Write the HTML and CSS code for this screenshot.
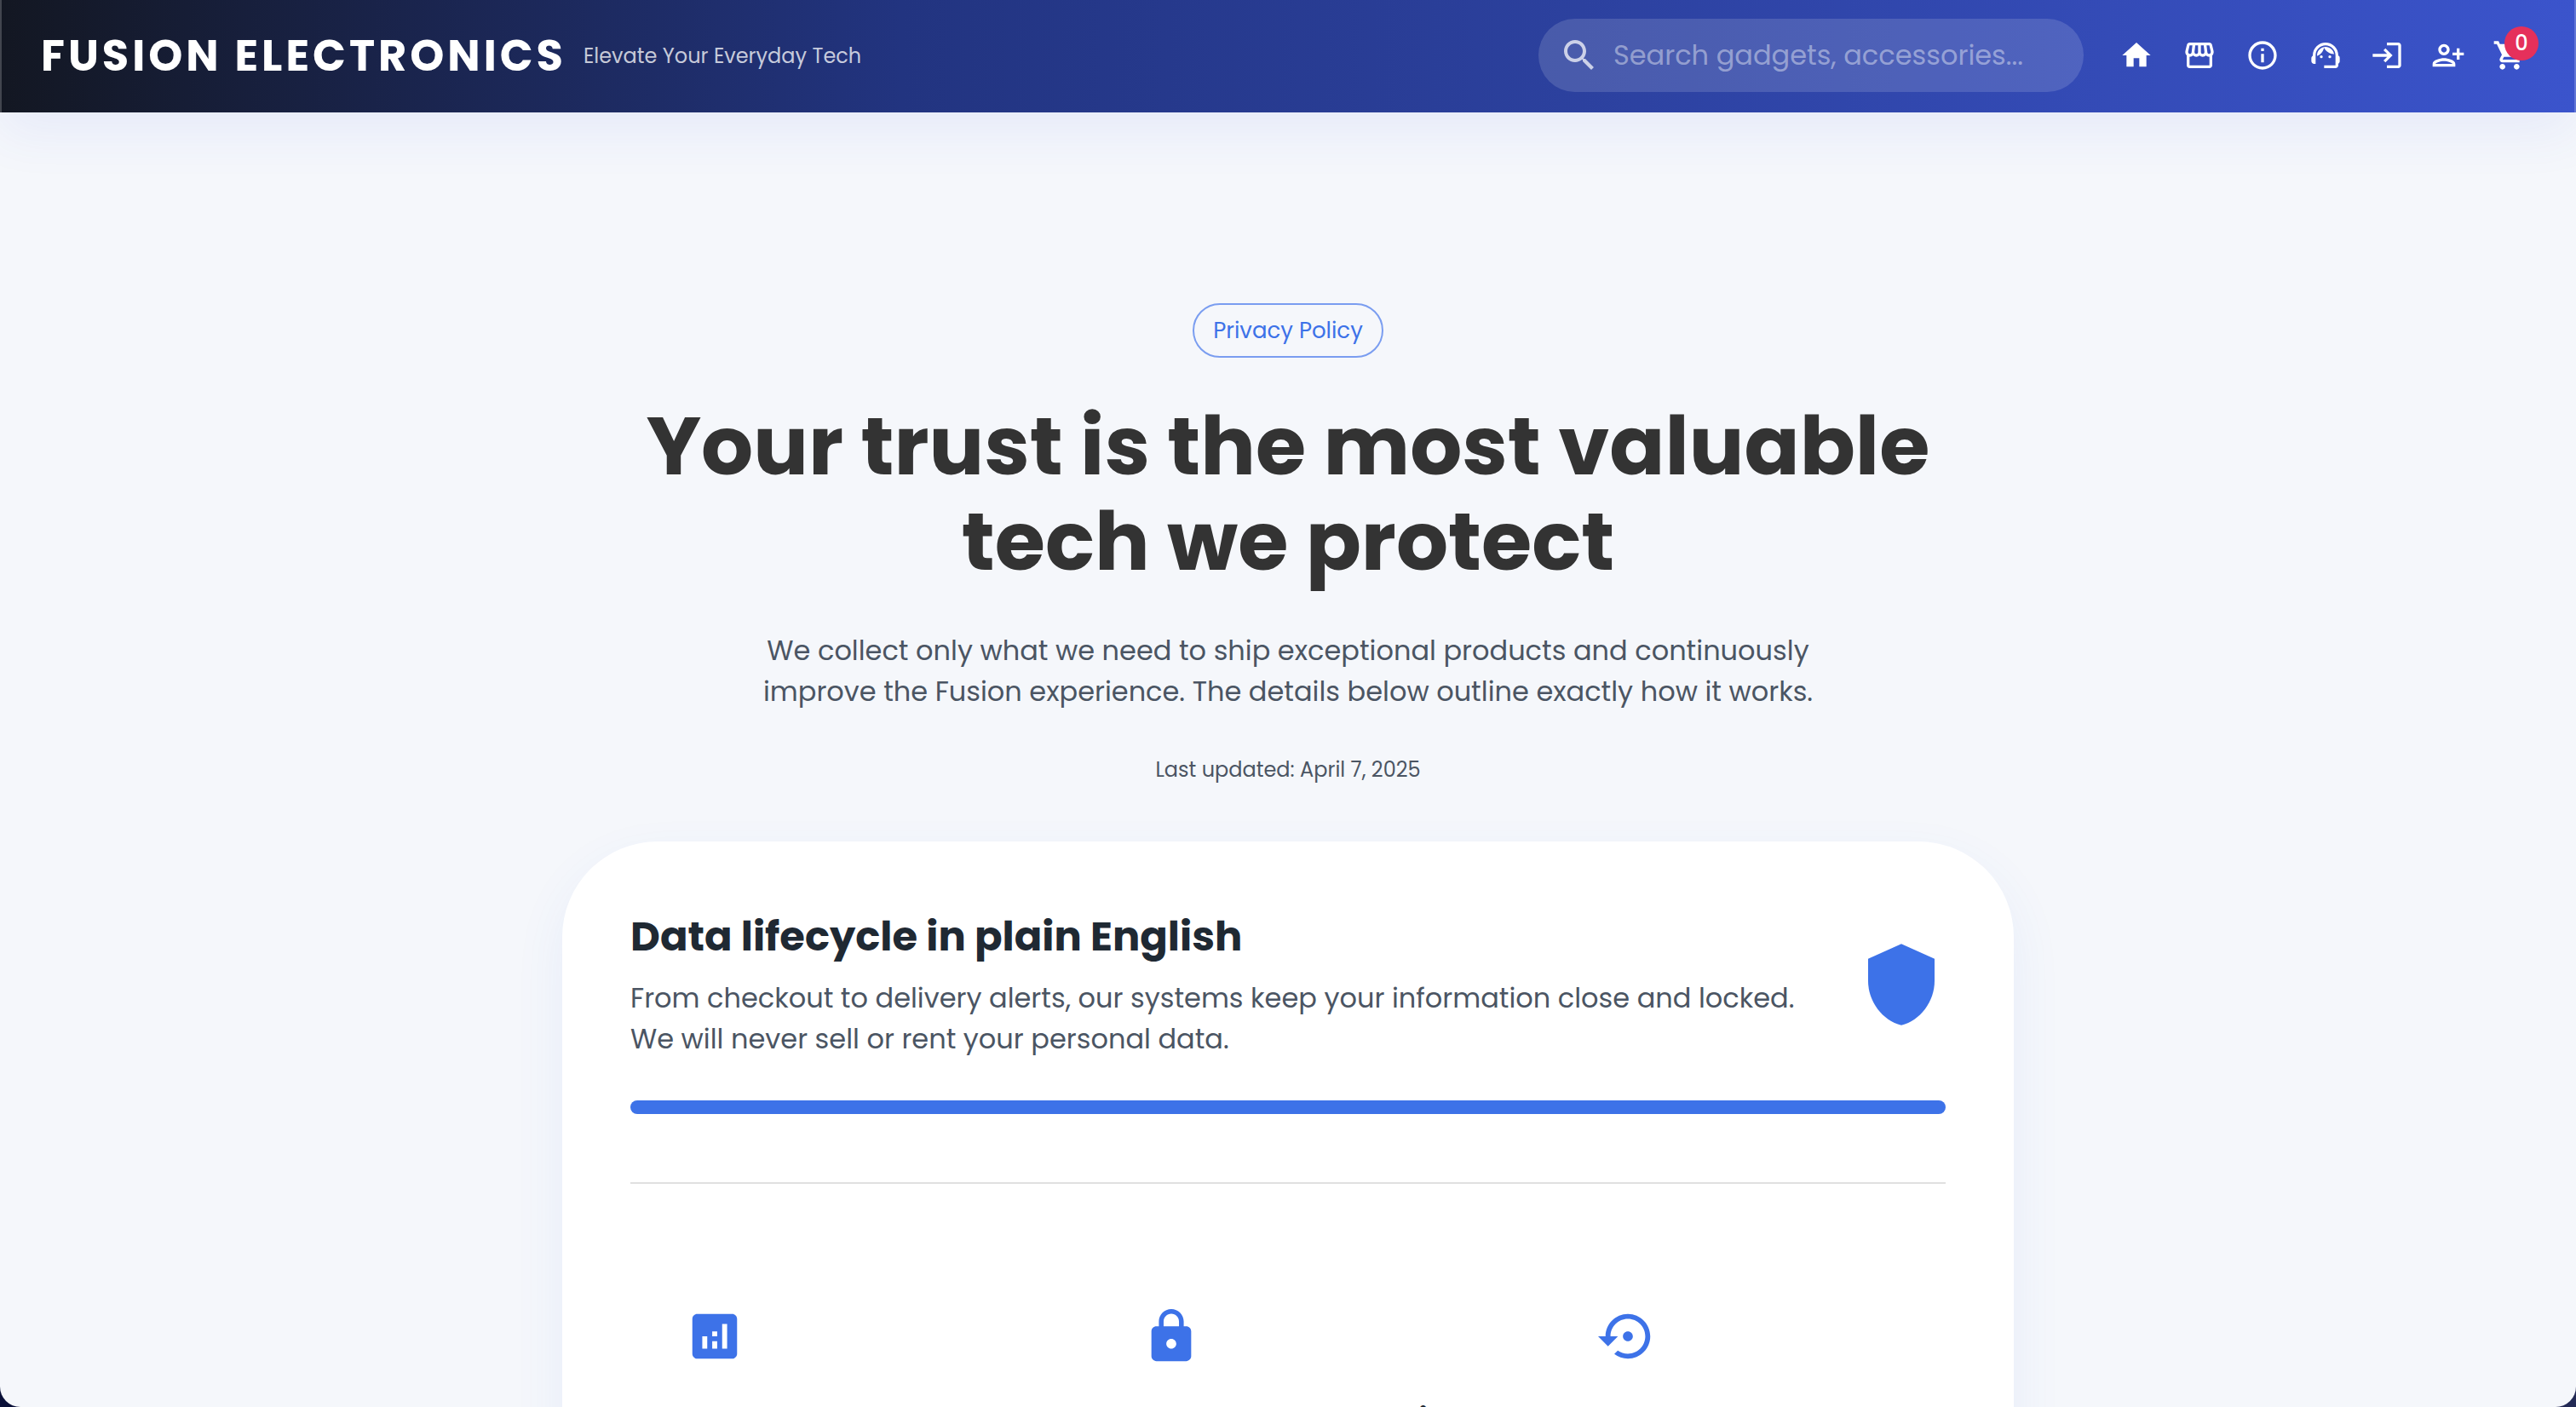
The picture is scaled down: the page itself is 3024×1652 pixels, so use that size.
FILE: index.html
```html
<!DOCTYPE html>
<html lang="en">
<head>
<meta charset="utf-8">
<meta name="viewport" content="width=device-width, initial-scale=1">
<title>Privacy Policy – Fusion Electronics</title>
<link rel="stylesheet" href="styles.css">
</head>
<body>
<div class="app">
  <header class="topbar">
    <a class="brand" href="#">FUSION ELECTRONICS</a>
    <span class="tagline">Elevate Your Everyday Tech</span>
    <label class="search">
      <svg class="search-icon" viewBox="0 0 24 24" aria-hidden="true"><path d="M15.5 14h-.79l-.28-.27C15.41 12.59 16 11.11 16 9.5 16 5.91 13.09 3 9.5 3S3 5.91 3 9.5 5.91 16 9.5 16c1.61 0 3.09-.59 4.23-1.57l.27.28v.79l5 4.99L20.49 19l-4.99-5zm-6 0C7.01 14 5 11.99 5 9.5S7.01 5 9.5 5 14 7.01 14 9.5 11.99 14 9.5 14z"/></svg>
      <input class="search-input" type="text" placeholder="Search gadgets, accessories..." aria-label="Search gadgets, accessories">
    </label>
    <nav class="nav">
      <div class="nav-links">
        <a class="nav-item" href="#" aria-label="Home"><svg viewBox="0 0 24 24"><path d="M10 20v-6h4v6h5v-8h3L12 3 2 12h3v8z"/></svg></a>
        <a class="nav-item" href="#" aria-label="Shop"><svg viewBox="0 0 24 24"><path d="M21.9 8.89l-1.05-4.37c-.22-.9-1-1.52-1.91-1.52H5.05c-.9 0-1.69.63-1.9 1.52L2.1 8.89c-.24 1.02-.02 2.06.62 2.88.08.11.19.19.28.29V19c0 1.1.9 2 2 2h14c1.1 0 2-.9 2-2v-6.94c.09-.09.2-.18.28-.28.64-.82.87-1.87.62-2.89zm-2.99-3.9l1.05 4.37c.1.42.01.84-.25 1.17-.14.18-.44.47-.94.47-.61 0-1.14-.49-1.21-1.14L16.98 5l1.93-.01zM13 5h1.96l.54 4.52c.05.39-.07.78-.33 1.07-.22.26-.54.41-.95.41-.67 0-1.22-.59-1.22-1.31V5zM8.49 9.52L9.04 5H11v4.69c0 .72-.55 1.31-1.29 1.31-.34 0-.65-.15-.89-.41-.25-.29-.37-.68-.33-1.07zm-4.45-.16L5.05 5h1.97l-.58 4.86c-.08.65-.6 1.14-1.21 1.14-.49 0-.8-.29-.93-.47-.27-.32-.36-.75-.26-1.17zM5 19v-6.03c.08.01.15.03.23.03.87 0 1.66-.36 2.24-.95.6.6 1.4.95 2.31.95.87 0 1.65-.36 2.23-.93.59.57 1.39.93 2.29.93.84 0 1.64-.35 2.24-.95.58.59 1.37.95 2.24.95.08 0 .15-.02.23-.03V19H5z"/></svg></a>
        <a class="nav-item" href="#" aria-label="About"><svg viewBox="0 0 24 24"><path d="M11 7h2v2h-2zm0 4h2v6h-2zm1-9C6.48 2 2 6.48 2 12s4.48 10 10 10 10-4.48 10-10S17.52 2 12 2zm0 18c-4.41 0-8-3.59-8-8s3.59-8 8-8 8 3.59 8 8-3.59 8-8 8z"/></svg></a>
        <a class="nav-item" href="#" aria-label="Support"><svg viewBox="0 0 24 24"><path d="M21 12.22C21 6.73 16.74 3 12 3c-4.69 0-9 3.65-9 9.28-.6.34-1 .98-1 1.72v2c0 1.1.9 2 2 2h1v-6.1c0-3.87 3.13-7 7-7s7 3.13 7 7V19h-8v2h8c1.1 0 2-.9 2-2v-1.22c.59-.31 1-.92 1-1.64v-2.3c0-.7-.41-1.31-1-1.62z"/><circle cx="9" cy="13" r="1"/><circle cx="15" cy="13" r="1"/><path d="M18 11.03C17.52 8.18 15.04 6 12.05 6c-3.03 0-6.29 2.51-6.03 6.45 2.47-1.01 4.33-3.21 4.86-5.89 1.31 2.63 4 4.44 7.12 4.47z"/></svg></a>
      </div>
      <a class="nav-item" href="#" aria-label="Log in"><svg viewBox="0 0 24 24"><path d="M11 7L9.6 8.4l2.6 2.6H2v2h10.2l-2.6 2.6L11 17l5-5-5-5zm9 12h-8v2h8c1.1 0 2-.9 2-2V5c0-1.1-.9-2-2-2h-8v2h8v14z"/></svg></a>
      <a class="nav-item" href="#" aria-label="Sign up"><svg viewBox="0 0 24 24"><path d="M13 8c0-2.21-1.79-4-4-4S5 5.79 5 8s1.79 4 4 4 4-1.79 4-4zm-2 0c0 1.1-.9 2-2 2s-2-.9-2-2 .9-2 2-2 2 .9 2 2zM1 18v2h16v-2c0-2.66-5.33-4-8-4s-8 1.34-8 4zm2 0c.2-.71 3.3-2 6-2 2.69 0 5.77 1.28 6 2H3zm17-3v-3h3v-2h-3V7h-2v3h-3v2h3v3h2z"/></svg></a>
      <a class="nav-item" href="#" aria-label="Cart"><svg viewBox="0 0 24 24"><path d="M7 18c-1.1 0-1.99.9-1.99 2S5.9 22 7 22s2-.9 2-2-.9-2-2-2zM1 2v2h2l3.6 7.59-1.35 2.45c-.16.28-.25.61-.25.96 0 1.1.9 2 2 2h12v-2H7.42c-.14 0-.25-.11-.25-.25l.03-.12.9-1.63h7.45c.75 0 1.41-.41 1.75-1.03l3.58-6.49c.08-.14.12-.31.12-.48 0-.55-.45-1-1-1H5.21l-.94-2H1zm16 16c-1.1 0-1.99.9-1.99 2s.89 2 1.99 2 2-.9 2-2-.9-2-2-2z"/></svg><span class="badge">0</span></a>
    </nav>
  </header>

  <main class="page">
    <section class="hero">
      <span class="chip">Privacy Policy</span>
      <h1 class="hero-title">Your trust is the most valuable tech we protect</h1>
      <p class="lead hero-lead">We collect only what we need to ship exceptional products and continuously improve the Fusion experience. The details below outline exactly how it works.</p>
      <p class="updated">Last updated: April 7, 2025</p>
    </section>

    <section class="card">
      <div class="card-head">
        <div class="card-copy">
          <h2 class="card-title">Data lifecycle in plain English</h2>
          <p class="lead">From checkout to delivery alerts, our systems keep your information close and locked. We will never sell or rent your personal data.</p>
        </div>
        <svg class="shield" viewBox="0 0 24 24" aria-hidden="true"><path d="M12 1L3 5v6c0 5.55 3.84 10.74 9 12 5.16-1.26 9-6.45 9-12V5l-9-4z"/></svg>
      </div>
      <div class="bar"></div>
      <hr class="divider">
      <div class="features">
        <article class="feature">
          <svg class="feature-icon" viewBox="0 0 24 24" aria-hidden="true"><path d="M19 3H5c-1.100 0-2 .9-2 2v14c0 1.100.9 2 2 2h14c1.100 0 2-.9 2-2V5c0-1.100-.9-2-2-2zM9 17H7v-5h2v5zm4 0h-2v-3h2v3zm0-5h-2v-2h2v2zm4 5h-2V7h2v10z"/></svg>
        </article>
        <article class="feature">
          <svg class="feature-icon" viewBox="0 0 24 24" aria-hidden="true"><path d="M18 8h-1V6c0-2.760-2.240-5-5-5S7 3.240 7 6v2H6c-1.100 0-2 .9-2 2v10c0 1.100.9 2 2 2h12c1.100 0 2-.9 2-2V10c0-1.100-.9-2-2-2zm-6 9c-1.100 0-2-.9-2-2s.9-2 2-2 2 .9 2 2-.9 2-2 2zm3.100-9H8.900V6c0-1.710 1.390-3.100 3.100-3.100s3.100 1.390 3.100 3.100v2z"/></svg>
          <h3 class="feature-title">i</h3>
        </article>
        <article class="feature">
          <svg class="feature-icon" viewBox="0 0 24 24" aria-hidden="true"><path d="M14 12c0-1.100-.9-2-2-2s-2 .9-2 2 .9 2 2 2 2-.9 2-2zm-2-9c-4.970 0-9 4.030-9 9H0l4 4 4-4H5c0-3.870 3.130-7 7-7s7 3.130 7 7-3.130 7-7 7c-1.510 0-2.910-.49-4.060-1.300l-1.420 1.440C8.040 20.300 9.940 21 12 21c4.970 0 9-4.030 9-9s-4.030-9-9-9z"/></svg>
        </article>
      </div>
    </section>
  </main>
</div>
</body>
</html>
```
FILE: styles.css
```css
* { box-sizing: border-box; }

html { background: linear-gradient(90deg, #0a1038, #232a55); }

body {
  margin: 0;
  font-family: Poppins, Inter, sans-serif;
  color: #4b5563;
}

h1, h2, h3, p { margin: 0; }

/* Window surface with rounded bottom corners */
.app {
  height: 100vh;
  overflow: hidden;
  background: #f5f7fb;
  border-radius: 0 0 24px 24px;
}

/* Header */
.topbar {
  position: relative;
  display: flex;
  align-items: center;
  height: 132px;
  padding: 0 40px 2px 46px;
  border: solid rgba(255, 255, 255, 0.2);
  border-width: 0 2px;
  background: linear-gradient(90deg, #131722 0%, #223480 35%, #3b54cc 100%) border-box;
  box-shadow: 0 24px 60px rgba(61, 90, 230, 0.08);
}

.brand {
  color: #fff;
  font-size: 51px;
  font-weight: 700;
  letter-spacing: 4px;
  text-decoration: none;
  white-space: nowrap;
}

.tagline {
  margin-left: 20px;
  color: rgba(255, 255, 255, 0.75);
  font-size: 24px;
  white-space: nowrap;
}

.search {
  display: flex;
  align-items: center;
  gap: 16px;
  width: 640px;
  height: 86px;
  margin-left: auto;
  padding: 0 24px;
  border-radius: 43px;
  background: rgba(255, 255, 255, 0.14);
}

.search-icon {
  flex: none;
  width: 48px;
  height: 48px;
  fill: rgba(255, 255, 255, 0.72);
}

.search-input {
  flex: 1;
  min-width: 0;
  padding: 0;
  border: 0;
  outline: 0;
  background: none;
  color: #fff;
  font: inherit;
  font-size: 32px;
}

.search-input::placeholder { color: rgba(255, 255, 255, 0.42); }

.nav, .nav-links { display: flex; }
.nav { margin-left: 26px; }
.nav-links { gap: 2px; }

.nav-item {
  position: relative;
  display: flex;
  padding: 16px;
}

.nav-item svg {
  width: 40px;
  height: 40px;
  fill: #fff;
}

.badge {
  position: absolute;
  top: 2px;
  right: 2px;
  min-width: 40px;
  height: 40px;
  border-radius: 20px;
  background: #e5305b;
  color: #fff;
  font-size: 24px;
  font-weight: 500;
  line-height: 40px;
  text-align: center;
}

/* Hero */
.page {
  display: flex;
  flex-direction: column;
  align-items: center;
  padding-top: 224px;
}

.hero {
  display: flex;
  flex-direction: column;
  align-items: center;
  gap: 48px;
  text-align: center;
}

.chip {
  height: 64px;
  padding: 0 22px;
  border: 2px solid #7a9df0;
  border-radius: 32px;
  color: #3d72e8;
  font-size: 26px;
  line-height: 60px;
}

.hero-title {
  max-width: 1600px;
  color: #333;
  font-size: 96px;
  font-weight: 700;
  line-height: 112px;
}

.lead {
  font-size: 32px;
  line-height: 48px;
}

.hero-lead { max-width: 1280px; }

.updated {
  font-size: 24px;
  line-height: 40px;
}

/* Lifecycle card */
.card {
  width: 100%;
  max-width: 1704px;
  margin-top: 64px;
  padding: 80px;
  border-radius: 112px;
  background: #fff;
  box-shadow: 0 24px 60px rgba(61, 114, 232, 0.08);
}

.card-head {
  display: flex;
  align-items: center;
  justify-content: space-between;
  gap: 48px;
}

.card-title {
  margin-bottom: 16px;
  color: #1f2933;
  font-size: 48px;
  font-weight: 700;
  line-height: 64px;
}

.shield {
  flex: none;
  width: 104px;
  height: 104px;
  fill: #3d72e8;
}

.bar {
  height: 16px;
  margin-top: 48px;
  border-radius: 8px;
  background: #3d72e8;
}

.divider {
  height: 2px;
  margin: 80px 0;
  border: 0;
  background: #e0e0e0;
}

.features {
  display: grid;
  grid-template-columns: repeat(3, 1fr);
  gap: 64px;
}

.feature { padding: 64px; }

.feature-icon {
  display: block;
  width: 70px;
  height: 70px;
  fill: #3d72e8;
}

.feature-title {
  margin-top: 40px;
  padding-right: 8px;
  color: #1f2933;
  font-size: 40px;
  font-weight: 600;
  line-height: 48px;
  text-align: right;
}
```
